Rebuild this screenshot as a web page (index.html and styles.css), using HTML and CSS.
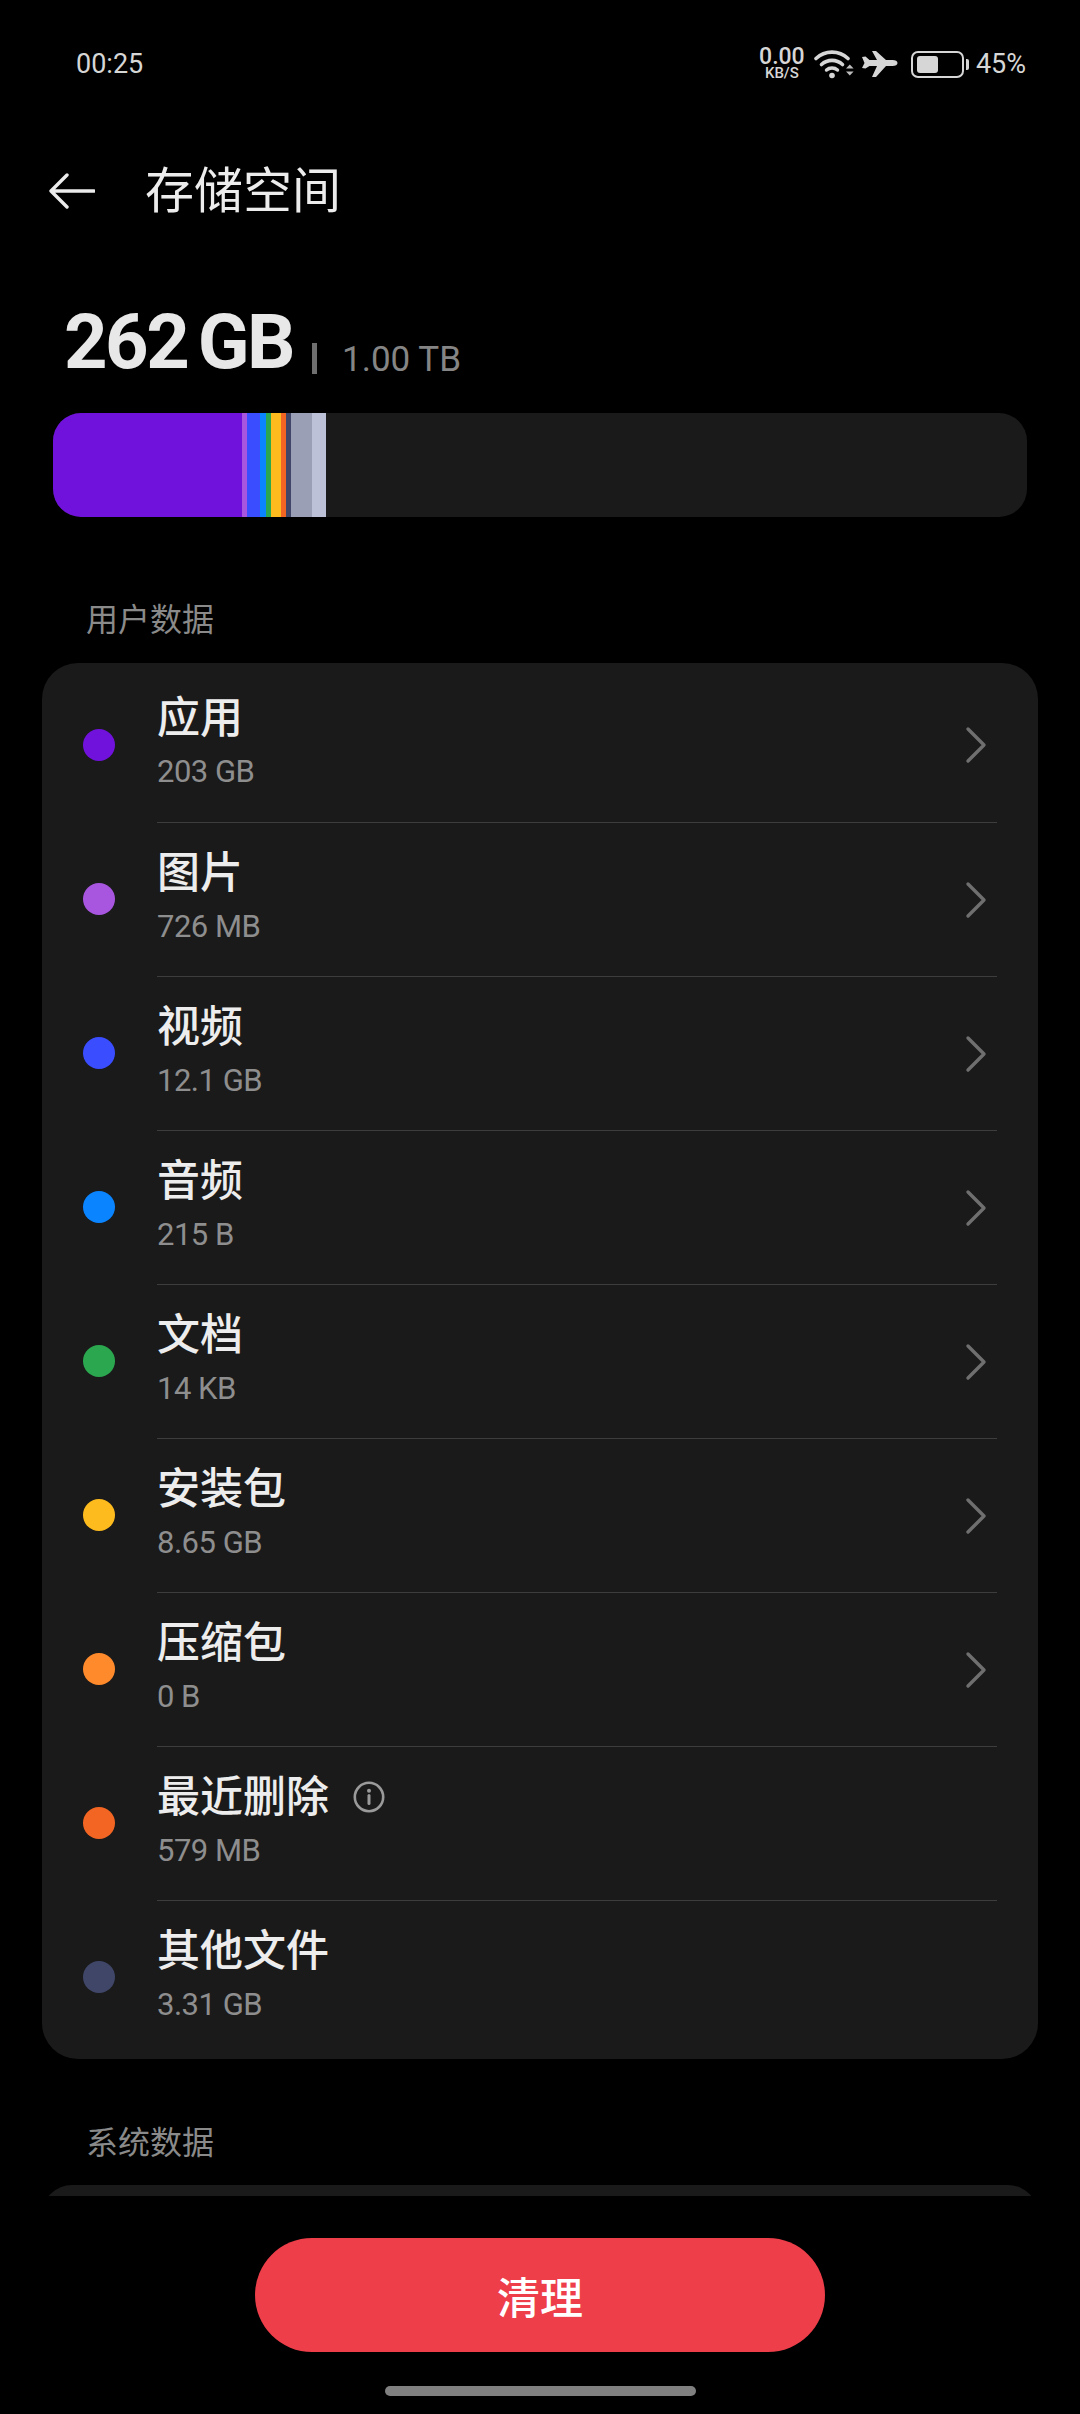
FILE: index.html
```html
<!DOCTYPE html>
<html lang="zh-CN">
<head>
  <meta charset="UTF-8">
  <title>存储空间</title>
  <link rel="stylesheet" href="styles.css">
</head>
<body>
  <div class="status-bar">
    <div class="clock">00:25</div>
    <div class="status-right">
      <div class="speed"><span class="speed-num">0.00</span><span class="speed-unit">KB/S</span></div>
      <svg class="ic-wifi" width="40" height="30" viewBox="0 0 40 30" fill="none">
        <path d="M2 9.5C11 1 25 1 34 9.5" stroke="#d6d6d6" stroke-width="3.6" stroke-linecap="round"/>
        <path d="M7.5 15.5C13.500 10 22.500 10 28.500 15.500" stroke="#d6d6d6" stroke-width="3.600" stroke-linecap="round"/>
        <path d="M12.500 21C15.500 18.300 20.500 18.300 23.500 21" stroke="#d6d6d6" stroke-width="3.400" stroke-linecap="round"/>
        <circle cx="18" cy="26.500" r="2.800" fill="#d6d6d6"/>
        <path d="M32 19.500l3.800-4 3.800 4zM32 22.500l3.800 4 3.800-4z" fill="#bdbdbd"/>
      </svg>
      <svg class="ic-plane" width="36" height="28" viewBox="0 0 36 28">
        <path d="M0 7l3.500-.5 4 3.500H15L10 1h4l10 9h6.500c3 0 5 1 5 3s-2 3-5 3H24l-10 11h-4l5-11H7.500l-4 2.500L0 18l2.500-5z" fill="#d6d6d6"/>
      </svg>
      <div class="battery"><div class="battery-fill"></div></div>
      <div class="battery-tip"></div>
      <div class="percent">45%</div>
    </div>
  </div>

  <div class="title-bar">
    <svg class="back" width="46" height="36" viewBox="0 0 46 36" fill="none">
      <path d="M45 18H3M18 2L2 18l16 16" stroke="#ececec" stroke-width="3.400" stroke-linecap="round" stroke-linejoin="round"/>
    </svg>
    <div class="title">存储空间</div>
  </div>

  <div class="scroll">
    <div class="usage">
      <span class="used">262 GB</span>
      <span class="usage-sep"></span>
      <span class="total">1.00 TB</span>
    </div>

    <div class="bar">
      <div class="seg" style="width:189px;background:#7012dc"></div>
      <div class="seg" style="width:5px;background:#a855e0"></div>
      <div class="seg" style="width:13px;background:#3a4dff"></div>
      <div class="seg" style="width:6px;background:#0a84ff"></div>
      <div class="seg" style="width:5px;background:#2ba84f"></div>
      <div class="seg" style="width:10px;background:#fdbb1e"></div>
      <div class="seg" style="width:5px;background:#f26522"></div>
      <div class="seg" style="width:5px;background:#3f4668"></div>
      <div class="seg" style="width:21px;background:#9a9fb5"></div>
      <div class="seg" style="width:14px;background:#bcc1d8"></div>
    </div>

    <div class="section-label">用户数据</div>
    <div class="card">
      <div class="row">
        <span class="dot" style="background:#7012dc"></span>
        <div class="row-body">
          <div class="row-text"><div class="name">应用</div><div class="size">203 GB</div></div>
          <svg class="chev" width="22" height="38" viewBox="0 0 22 38" fill="none"><path d="M3 3l16 16L3 35" stroke="#6f6f6f" stroke-width="3.400" stroke-linecap="round" stroke-linejoin="round"/></svg>
        </div>
      </div>
      <div class="row">
        <span class="dot" style="background:#a855e0"></span>
        <div class="row-body">
          <div class="row-text"><div class="name">图片</div><div class="size">726 MB</div></div>
          <svg class="chev" width="22" height="38" viewBox="0 0 22 38" fill="none"><path d="M3 3l16 16L3 35" stroke="#6f6f6f" stroke-width="3.400" stroke-linecap="round" stroke-linejoin="round"/></svg>
        </div>
      </div>
      <div class="row">
        <span class="dot" style="background:#3a4dff"></span>
        <div class="row-body">
          <div class="row-text"><div class="name">视频</div><div class="size">12.1 GB</div></div>
          <svg class="chev" width="22" height="38" viewBox="0 0 22 38" fill="none"><path d="M3 3l16 16L3 35" stroke="#6f6f6f" stroke-width="3.400" stroke-linecap="round" stroke-linejoin="round"/></svg>
        </div>
      </div>
      <div class="row">
        <span class="dot" style="background:#0a84ff"></span>
        <div class="row-body">
          <div class="row-text"><div class="name">音频</div><div class="size">215 B</div></div>
          <svg class="chev" width="22" height="38" viewBox="0 0 22 38" fill="none"><path d="M3 3l16 16L3 35" stroke="#6f6f6f" stroke-width="3.400" stroke-linecap="round" stroke-linejoin="round"/></svg>
        </div>
      </div>
      <div class="row">
        <span class="dot" style="background:#2ba84f"></span>
        <div class="row-body">
          <div class="row-text"><div class="name">文档</div><div class="size">14 KB</div></div>
          <svg class="chev" width="22" height="38" viewBox="0 0 22 38" fill="none"><path d="M3 3l16 16L3 35" stroke="#6f6f6f" stroke-width="3.400" stroke-linecap="round" stroke-linejoin="round"/></svg>
        </div>
      </div>
      <div class="row">
        <span class="dot" style="background:#fdbb1e"></span>
        <div class="row-body">
          <div class="row-text"><div class="name">安装包</div><div class="size">8.65 GB</div></div>
          <svg class="chev" width="22" height="38" viewBox="0 0 22 38" fill="none"><path d="M3 3l16 16L3 35" stroke="#6f6f6f" stroke-width="3.400" stroke-linecap="round" stroke-linejoin="round"/></svg>
        </div>
      </div>
      <div class="row">
        <span class="dot" style="background:#ff8a2b"></span>
        <div class="row-body">
          <div class="row-text"><div class="name">压缩包</div><div class="size">0 B</div></div>
          <svg class="chev" width="22" height="38" viewBox="0 0 22 38" fill="none"><path d="M3 3l16 16L3 35" stroke="#6f6f6f" stroke-width="3.400" stroke-linecap="round" stroke-linejoin="round"/></svg>
        </div>
      </div>
      <div class="row">
        <span class="dot" style="background:#f26522"></span>
        <div class="row-body">
          <div class="row-text">
            <div class="name">最近删除
              <svg class="info" width="32" height="32" viewBox="0 0 32 32" fill="none">
                <circle cx="16" cy="16" r="14.200" stroke="#9a9a9a" stroke-width="2.600"/>
                <circle cx="16" cy="9.800" r="2" fill="#9a9a9a"/>
                <path d="M16 14.500v8" stroke="#9a9a9a" stroke-width="3" stroke-linecap="round"/>
              </svg>
            </div>
            <div class="size">579 MB</div>
          </div>
        </div>
      </div>
      <div class="row">
        <span class="dot" style="background:#3f4668"></span>
        <div class="row-body">
          <div class="row-text"><div class="name">其他文件</div><div class="size">3.31 GB</div></div>
        </div>
      </div>
    </div>

    <div class="section-label section-system">系统数据</div>
    <div class="card card-cut"></div>
  </div>

  <div class="footer">
    <div class="clean-btn">清理</div>
    <div class="home-bar"></div>
  </div>
</body>
</html>
```

FILE: styles.css
```css
* {
  box-sizing: border-box;
}

html, body {
  margin: 0;
  height: 2414px;
  background: #000;
  overflow: hidden;
}

body {
  font-family: Roboto, "Noto Sans CJK SC", sans-serif;
  color: #ececec;
}

.status-bar {
  height: 128px;
  padding: 0 54px 0 76px;
  display: flex;
  justify-content: space-between;
  align-items: center;
}

.clock {
  font-size: 27px;
  color: #d6d6d6;
}

.status-right {
  display: flex;
  align-items: center;
}

.speed {
  display: flex;
  flex-direction: column;
  align-items: center;
  color: #d6d6d6;
  font-weight: 500;
  margin-right: 9px;
  width: 46px;
}

.speed-num {
  font-size: 23px;
  line-height: 19px;
}

.speed-unit {
  font-size: 15px;
  line-height: 15px;
}

.ic-wifi {
  margin-right: 8px;
}

.ic-plane {
  margin-right: 13px;
}

.battery {
  width: 53px;
  height: 27px;
  border: 2px solid #d6d6d6;
  border-radius: 7px;
  padding: 3px 4px;
}

.battery-fill {
  width: 21px;
  height: 100%;
  background: #d6d6d6;
  border-radius: 3px;
}

.battery-tip {
  width: 3px;
  height: 11px;
  margin-left: 2px;
  background: #d6d6d6;
  border-radius: 0 2px 2px 0;
}

.percent {
  font-size: 27px;
  color: #d6d6d6;
  margin-left: 7px;
}

.title-bar {
  height: 126px;
  padding-left: 49px;
  display: flex;
  align-items: center;
}

.back {
  margin-right: 50px;
}

.title {
  font-size: 49px;
  line-height: 1;
}

/* content clipped right above the button */
.scroll {
  height: 1942px;
  overflow: hidden;
}

.usage {
  height: 159px;
  padding: 29px 0 0 64px;
  display: flex;
  align-items: baseline;
}

.used {
  font-size: 76px;
  line-height: 118px;
  font-weight: 700;
  letter-spacing: -2.5px;
  word-spacing: -6px;
  color: #e8e8e8;
}

.usage-sep {
  width: 5px;
  height: 31px;
  margin: 0 25px 0 19px;
  background: #6f6f6f;
  transform: translateY(6px);
}

.total {
  font-size: 35px;
  color: #858585;
  transform: translateY(3px);
}

.bar {
  margin: 0 53px;
  height: 104px;
  background: #1a1a1a;
  border-radius: 28px;
  overflow: hidden;
  display: flex;
}

.seg {
  height: 100%;
}

.section-label {
  padding-left: 86px;
  margin-top: 79px;
  height: 67px;
  font-size: 32px;
  line-height: 48px;
  color: #8a8a8a;
}

.card {
  margin: 0 42px;
  background: #1a1a1a;
  border-radius: 36px;
  padding: 5px 41px;
}

.row {
  height: 154px;
  display: flex;
  align-items: center;
}

.dot {
  width: 32px;
  height: 32px;
  border-radius: 50%;
  flex-shrink: 0;
  margin-right: 42px;
}

.row-body {
  flex: 1;
  height: 100%;
  display: flex;
  align-items: center;
  justify-content: space-between;
  padding-right: 10px;
}

.row + .row .row-body {
  border-top: 1px solid #3d3d3d;
}

.row-text {
  margin-top: -7px;
}

.name {
  font-size: 43px;
  line-height: 56px;
  margin-bottom: 5px;
  font-weight: 500;
  color: #ededed;
  display: flex;
  align-items: center;
}

.info {
  margin-left: 24px;
}

.size {
  font-size: 31px;
  line-height: 42px;
  letter-spacing: -0.5px;
  color: #8e8e8e;
}

.section-system {
  margin-top: 60px;
  height: 66px;
}

.card-cut {
  height: 60px;
}

.footer {
  display: flex;
  flex-direction: column;
  align-items: center;
  padding-top: 42px;
}

.clean-btn {
  width: 570px;
  height: 114px;
  border-radius: 57px;
  background: #ee3e4a;
  color: #fff;
  font-size: 43px;
  font-weight: 500;
  display: flex;
  align-items: center;
  justify-content: center;
}

.home-bar {
  width: 311px;
  height: 10px;
  margin-top: 34px;
  background: #808080;
  border-radius: 5px;
}
```
